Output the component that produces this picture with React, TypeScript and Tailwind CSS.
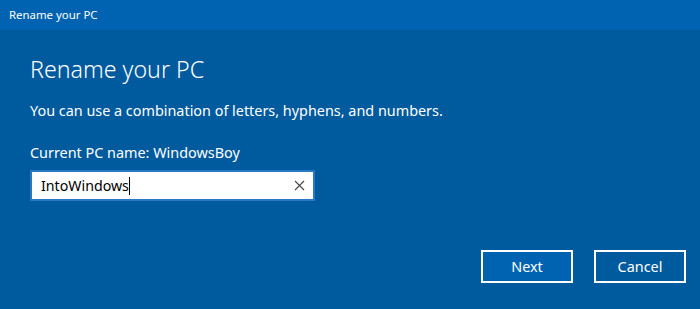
export default function App() {
  return (
    <div
      className="w-[700px] h-[309px] flex flex-col bg-[#005a9e] text-white overflow-hidden"
      style={{ fontFamily: '"Noto Sans", "Open Sans", sans-serif' }}
    >
      <div className="h-[30px] shrink-0 bg-[#0063b1] flex items-center pl-[9px] text-[11.4px]">
        Rename your PC
      </div>
      <div className="flex-1 flex flex-col pl-[30px] pr-[14px]">
        <h1 className="mt-[23px] text-[23.2px] font-light leading-[32px]">Rename your PC</h1>
        <p className="mt-[16px] text-[14.4px] leading-[20px]">
          You can use a combination of letters, hyphens, and numbers.
        </p>
        <p className="mt-[22px] text-[14.4px] leading-[20px]">Current PC name: WindowsBoy</p>
        <div className="mt-[7px] w-[285px] h-[31px] bg-white border-2 border-[#2a78c2] flex items-center pl-[9px] pr-[8px] text-black text-[14.2px]">
          <span>IntoWindows</span>
          <span className="w-px h-[18px] bg-black" />
          <span className="ml-auto">
            <svg width="11" height="11" viewBox="0 0 11 11" stroke="#444" strokeWidth="1.1">
              <path d="M1 1 L10 10 M10 1 L1 10" />
            </svg>
          </span>
        </div>
        <div className="mt-auto mb-[26px] flex justify-end gap-[21px]">
          <button className="w-[92px] h-[33px] border-2 border-white bg-[#0063b1] text-[14.4px]">Next</button>
          <button className="w-[92px] h-[33px] border-2 border-white bg-[#005a9e] text-[14.4px]">Cancel</button>
        </div>
      </div>
    </div>
  )
}
